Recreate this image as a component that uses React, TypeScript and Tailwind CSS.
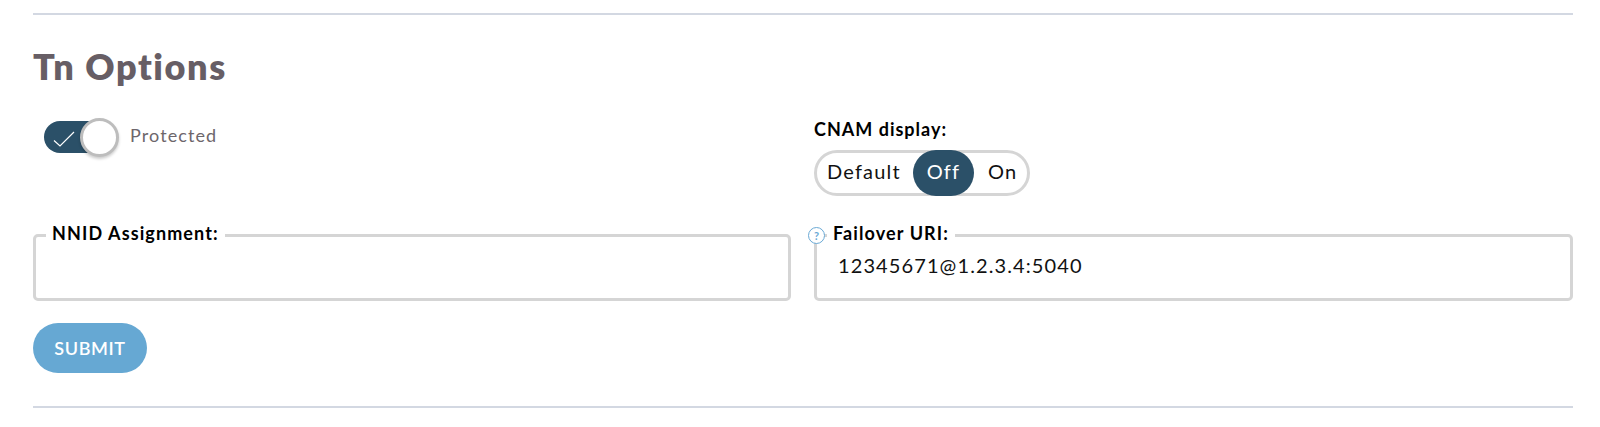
import { useState } from 'react';

const fontStack = "font-['Lato','Liberation_Sans',sans-serif]";

function FieldBox({ label, value, hint }: { label: string; value?: string; hint?: boolean }) {
  return (
    <div className="relative">
      {hint && (
        <div className="absolute left-[-6px] top-[6px] z-10 flex h-[17px] w-[17px] items-center justify-center rounded-full border-[1.5px] border-[#6aa9d5] bg-white text-[11px] font-bold leading-none text-[#6aa9d5]">
          ?
        </div>
      )}
      <fieldset className="h-[80px] rounded-[5px] border-[3px] border-[#d5d5d5] pl-[10px] pr-4">
        <legend className="px-[6px] pb-[5px] text-[18px] font-bold leading-6 tracking-[1.1px] text-black">{label}</legend>
        <div className="pl-[11px] pt-[1px] text-[20px] leading-7 tracking-[1.1px] text-[#111]">{value}</div>
      </fieldset>
    </div>
  );
}

export default function App() {
  const [cnam] = useState('Off');

  return (
    <div className={`h-[427px] w-[1600px] overflow-hidden bg-white pl-[33px] pr-[27px] pt-[13px] ${fontStack}`}>
      <hr className="border-0 border-t-2 border-[#d3d8e2]" />

      <h2 className="mt-[29px] text-[36px] font-extrabold leading-[44px] tracking-[1.6px] text-[#675e65]">Tn Options</h2>

      <div className="grid grid-cols-[758px_759px] gap-x-[23px]">
        <div className="flex items-start pl-[11px] pt-[33px]">
          <div className="relative h-8 w-[62px] rounded-full bg-[#2b5068]">
            <svg className="absolute left-[9px] top-[10px] h-4 w-[22px]" viewBox="0 0 22 16" fill="none">
              <path d="M1 9.5 L7 15 L21 1" stroke="white" strokeWidth="1.2" />
            </svg>
            <div className="absolute left-[36px] top-[-3px] h-[39px] w-[39px] rounded-full border-[3px] border-[#bdbdbd] bg-white shadow-[0_2px_3px_rgba(0,0,0,0.2)]" />
          </div>
          <span className="ml-[24px] mt-[2px] text-[18px] leading-6 tracking-[1.1px] text-[#6d666b]">Protected</span>
        </div>

        <div className="pt-[29px]">
          <div className="text-[18px] font-bold leading-6 tracking-[1px] text-black">CNAM display:</div>
          <div className="mt-[9px] flex h-[46px] w-[216px] items-center rounded-full border-[3px] border-[#d5d5d5] text-[20px] tracking-[1.2px] text-[#111]">
            <span className="w-[96px] pb-[4px] pl-[10px]">Default</span>
            <span className={`flex h-[46px] w-[61px] items-center justify-center rounded-full pb-[4px] ${cnam === 'Off' ? 'bg-[#2b5068] text-white' : ''}`}>
              Off
            </span>
            <span className="pb-[4px] pl-[14px]">On</span>
          </div>
        </div>

        <div className="col-span-2 mt-[25px] grid grid-cols-[758px_759px] gap-x-[23px]">
          <FieldBox label="NNID Assignment:" />
          <FieldBox label="Failover URI:" value="12345671@1.2.3.4:5040" hint />
        </div>
      </div>

      <button className="mt-[22px] flex h-[50px] w-[114px] items-center justify-center rounded-full bg-[#66a8d3] text-[18px] font-semibold tracking-[0.6px] text-white">
        SUBMIT
      </button>

      <hr className="mt-[33px] border-0 border-t-2 border-[#d3d8e2]" />
    </div>
  );
}
